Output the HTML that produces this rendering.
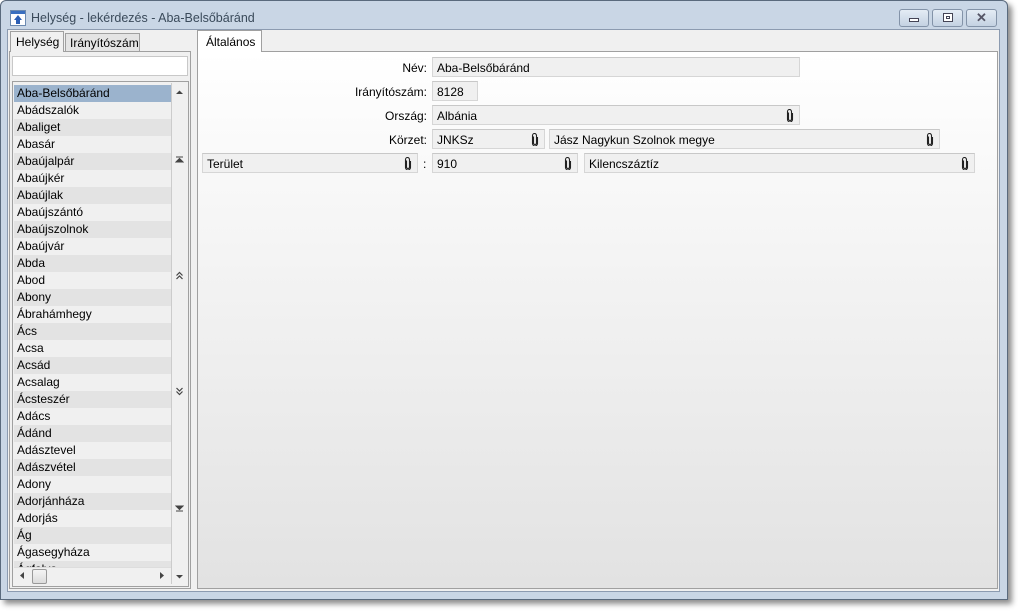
<!DOCTYPE html><html><head><meta charset="utf-8"><style>
*{box-sizing:border-box;margin:0;padding:0}
body{width:1018px;height:611px;background:#fff;font-family:"Liberation Sans",sans-serif;font-size:12px;color:#000;position:relative;overflow:hidden}
.a{position:absolute}
.win{left:0;top:0;width:1008px;height:600px;background:#c9d6e5;border:1px solid #5a6a7d;border-radius:6px 6px 0 0;box-shadow:4px 4px 6px rgba(0,0,0,.45)}
.client{left:7px;top:29px;width:993px;height:563px;background:#f0f0f0;border:1px solid #8c9bb0}
.btn{top:9px;height:18px;border:1px solid #8393a8;border-radius:3px;background:linear-gradient(#e4ecf5,#c4d2e2)}
.fld{position:absolute;height:20px;background:#f0f0f0;border:1px solid #d6d6d6;border-top-color:#c8c8c8;padding:3px 4px;white-space:nowrap}
.clip{position:absolute;right:5px;top:3px;width:8px;height:13px}
.lbl{position:absolute;text-align:right;width:200px}
.row{position:absolute;left:14px;width:157px;height:17px;padding:1px 3px;white-space:nowrap;overflow:hidden;font-size:12px}
.sb{position:absolute;left:175px;width:9px;height:9px}
</style></head><body>
<svg width="0" height="0" style="position:absolute"><defs>
<symbol id="clp" viewBox="0 0 8 13"><path d="M2.5 3.5V10a1.5 1.5 0 0 0 3 0V2.5a2 2 0 0 0-4 0V10.5a2.5 2.5 0 0 0 5 0V4" fill="none" stroke="#222" stroke-width="1.1"/></symbol>
</defs></svg>
<div class="a win"></div>
<div class="a" style="left:10px;top:10px;width:16px;height:16px;background:#fff;border:1px solid #6c8ab0"><div class="a" style="left:0;top:0;width:14px;height:3px;background:#3a6fc0"></div><div class="a" style="left:3px;top:4px;width:0;height:0;border-left:4px solid transparent;border-right:4px solid transparent;border-bottom:5px solid #2c5fb5"></div><div class="a" style="left:5px;top:8px;width:4px;height:5px;background:#2c5fb5"></div></div>
<div class="a" style="left:31px;top:11px;font-size:12.5px;color:#3a4a5a">Helység - lekérdezés - Aba-Belsőbáránd</div>
<div class="a btn" style="left:899px;width:30px"><div class="a" style="left:9px;top:8px;width:10px;height:4px;border:1px solid #445;background:#fff"></div></div>
<div class="a btn" style="left:932px;width:31px"><div class="a" style="left:10px;top:3px;width:10px;height:9px;border:1px solid #445;background:#fff"><div style="margin:2px;height:3px;border:1px solid #445"></div></div></div>
<div class="a btn" style="left:966px;width:31px;text-align:center;font-size:13px;font-weight:bold;color:#556;line-height:16px">✕</div>
<div class="a client"></div>
<div class="a" style="left:9px;top:51px;width:182px;height:538px;border:1px solid #a0a0a0;background:#f0f0f0"></div>
<div class="a" style="left:10px;top:31px;width:54px;height:21px;background:#f0f0f0;border:1px solid #a0a0a0;border-bottom:none;padding:3px 5px">Helység</div>
<div class="a" style="left:65px;top:33px;width:75px;height:19px;background:#e4e4e4;border:1px solid #a0a0a0;padding:2px 4px">Irányítószám</div>
<div class="a" style="left:12px;top:56px;width:176px;height:20px;background:#fff;border:1px solid #c8c8c8"></div>
<div class="a" style="left:12px;top:81px;width:177px;height:506px;border:1px solid #a0a0a0;background:#f0f0f0"></div>
<div class="a" style="left:171px;top:83px;width:17px;height:501px;background:#f0f0f0;border-left:1px solid #ccc"></div>
<svg class="sb" style="top:88px" viewBox="0 0 9 9"><path d="M1 6L4.5 2.5L8 6Z" fill="#444"/></svg>
<svg class="sb" style="top:156px" viewBox="0 0 9 9"><path d="M1 1H8M1 6L4.5 2.5L8 6Z" stroke="#444" fill="#444"/></svg>
<svg class="sb" style="top:271px" viewBox="0 0 9 9"><path d="M1.5 4.5L4.5 1.5L7.5 4.5M1.5 8L4.5 5L7.5 8" stroke="#444" fill="none" stroke-width="1.2"/></svg>
<svg class="sb" style="top:387px" viewBox="0 0 9 9"><path d="M1.5 1L4.5 4L7.5 1M1.5 4.5L4.5 7.5L7.5 4.5" stroke="#444" fill="none" stroke-width="1.2"/></svg>
<svg class="sb" style="top:503px" viewBox="0 0 9 9"><path d="M1 8H8M1 3L4.5 6.5L8 3Z" stroke="#444" fill="#444"/></svg>
<svg class="sb" style="top:572px" viewBox="0 0 9 9"><path d="M1 3L4.5 6.5L8 3Z" fill="#444"/></svg>
<div id="list"></div>
<div class="a" style="left:14px;top:567px;width:157px;height:17px;background:#f0f0f0;border-top:1px solid #ddd"></div>
<svg class="a" style="left:18px;top:571px" width="8" height="9" viewBox="0 0 8 9"><path d="M6 1L2 4.5L6 8Z" fill="#444"/></svg>
<div class="a" style="left:32px;top:569px;width:15px;height:15px;border:1px solid #999;border-radius:2px;background:linear-gradient(#f4f4f4,#dcdcdc)"></div>
<svg class="a" style="left:158px;top:571px" width="8" height="9" viewBox="0 0 8 9"><path d="M2 1L6 4.5L2 8Z" fill="#444"/></svg>
<div class="a" style="left:197px;top:51px;width:801px;height:538px;border:1px solid #a0a0a0;background:linear-gradient(#fff,#e2e2e2)"></div>
<div class="a" style="left:197px;top:30px;width:65px;height:22px;background:#fff;border:1px solid #a0a0a0;border-bottom:none;padding:4px 8px">Általános</div>
<div class="lbl" style="left:227px;top:61px">Név:</div>
<div class="fld" style="left:432px;top:57px;width:368px">Aba-Belsőbáránd</div>
<div class="lbl" style="left:227px;top:85px">Irányítószám:</div>
<div class="fld" style="left:432px;top:81px;width:46px">8128</div>
<div class="lbl" style="left:227px;top:109px">Ország:</div>
<div class="fld" style="left:432px;top:105px;width:368px">Albánia<svg class="clip"><use href="#clp"/></svg></div>
<div class="lbl" style="left:227px;top:133px">Körzet:</div>
<div class="fld" style="left:432px;top:129px;width:113px">JNKSz<svg class="clip"><use href="#clp"/></svg></div>
<div class="fld" style="left:549px;top:129px;width:391px">Jász Nagykun Szolnok megye<svg class="clip"><use href="#clp"/></svg></div>
<div class="fld" style="left:202px;top:153px;width:216px">Terület<svg class="clip"><use href="#clp"/></svg></div>
<div class="a" style="left:423px;top:157px">:</div>
<div class="fld" style="left:432px;top:153px;width:146px">910<svg class="clip"><use href="#clp"/></svg></div>
<div class="fld" style="left:584px;top:153px;width:391px">Kilencszáztíz<svg class="clip"><use href="#clp"/></svg></div>
<script>
var n=["Aba-Belsőbáránd","Abádszalók","Abaliget","Abasár","Abaújalpár","Abaújkér","Abaújlak","Abaújszántó","Abaújszolnok","Abaújvár","Abda","Abod","Abony","Ábrahámhegy","Ács","Acsa","Acsád","Acsalag","Ácsteszér","Adács","Ádánd","Adásztevel","Adászvétel","Adony","Adorjánháza","Adorjás","Ág","Ágasegyháza","Ágfalva"];
var h="";for(var i=0;i<n.length;i++){var t=85+i*17;if(t>566)break;var bg=i==0?"#9bb3cd":(i%2?"#f0f0f0":"#e3e3e3");var hh=Math.min(17,567-t);h+='<div class="row" style="top:'+t+'px;height:'+hh+'px;background:'+bg+'">'+n[i]+'</div>';}
document.getElementById("list").innerHTML=h;
</script>
</body></html>
